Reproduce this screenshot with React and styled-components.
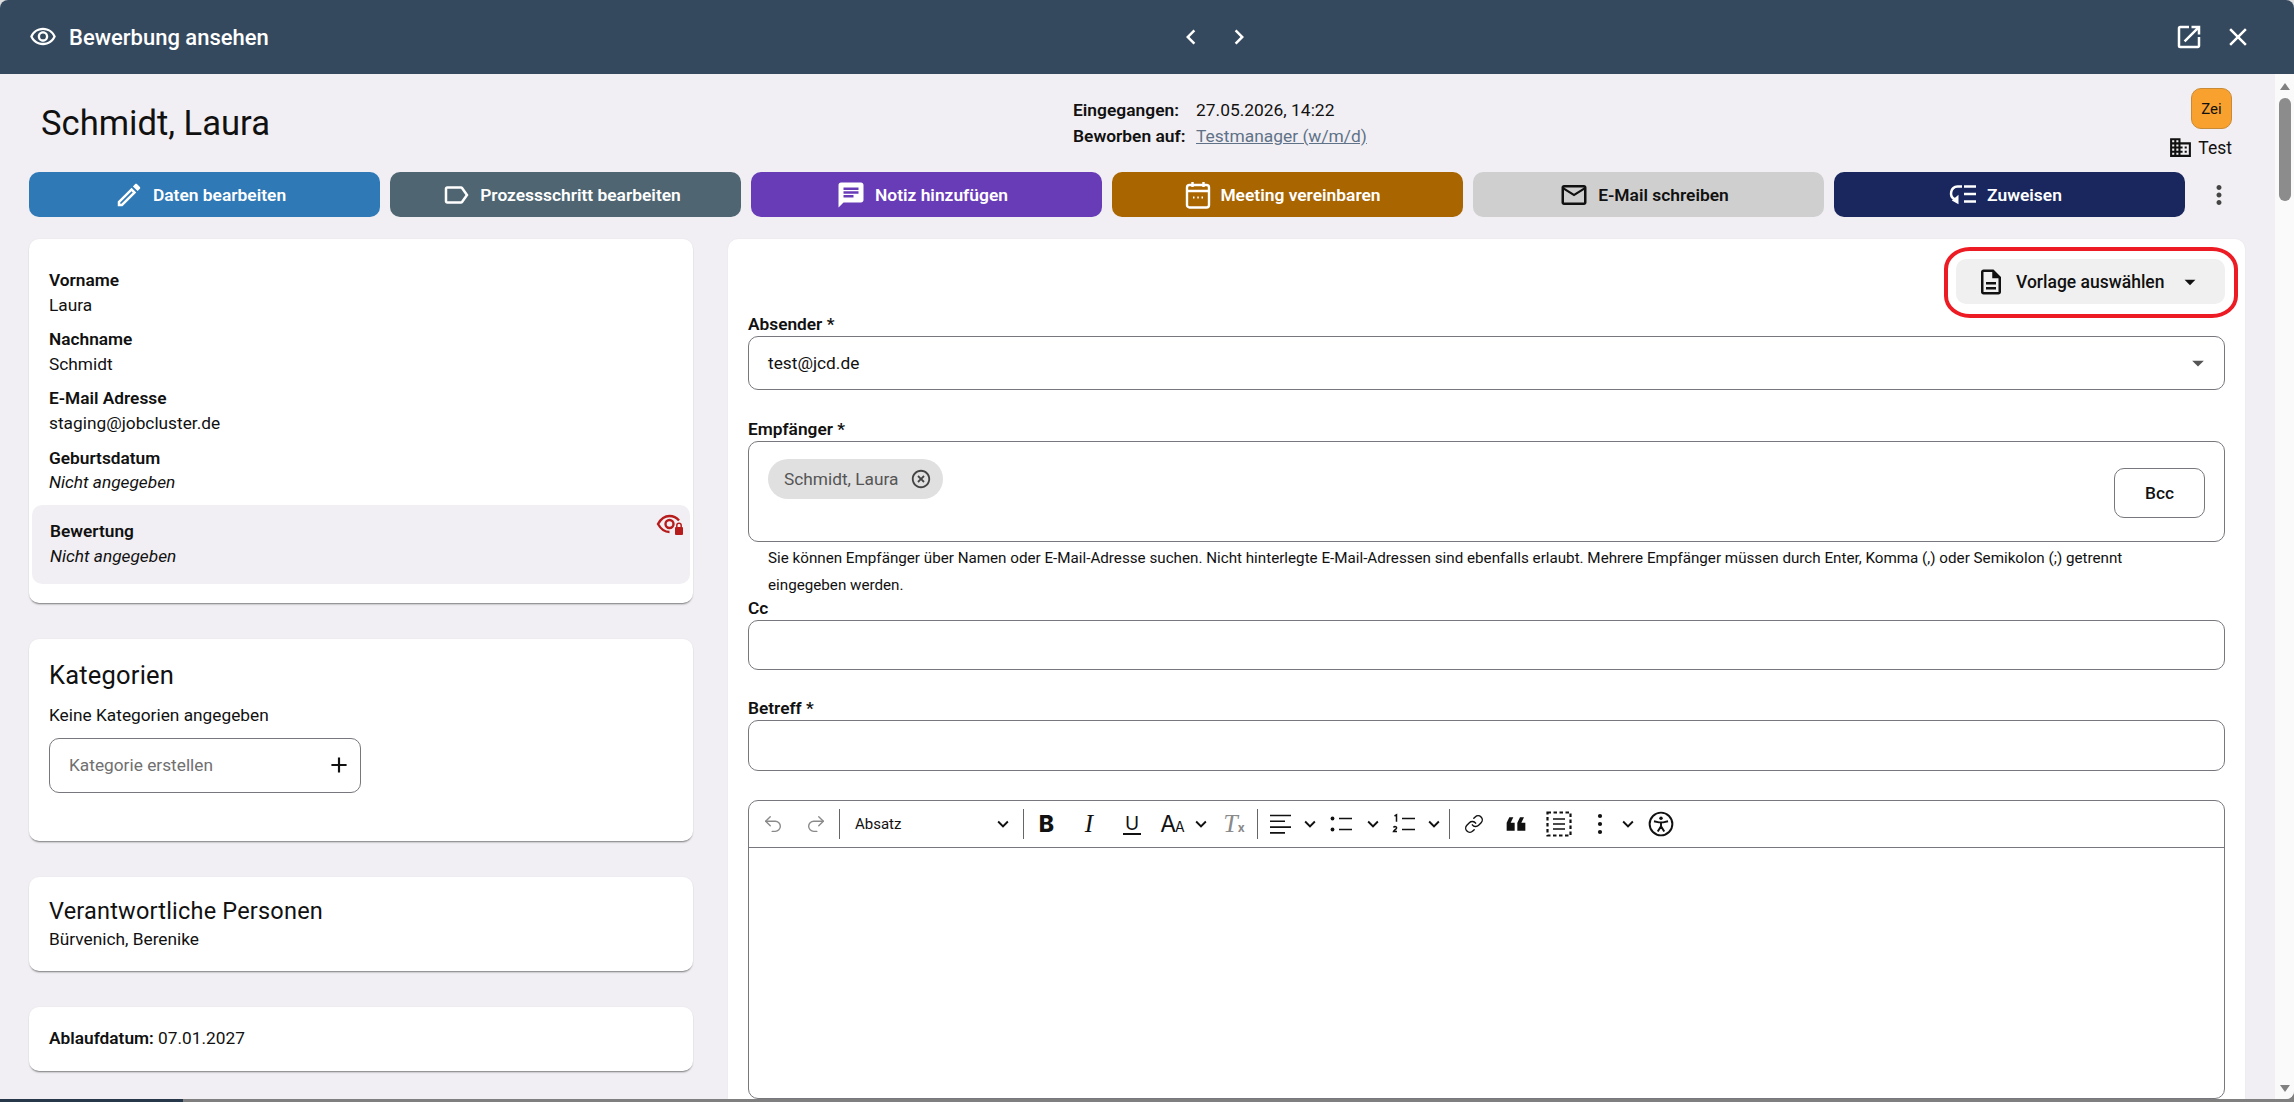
import React from 'react';
import styled, { createGlobalStyle } from 'styled-components';
import {
  MdOutlineVisibility, MdOpenInNew, MdClose, MdChevronLeft, MdChevronRight, MdOutlineEdit, MdOutlineLabel,
  MdChat, MdMailOutline, MdMoreVert, MdDomain, MdAdd, MdHighlightOff,
  MdOutlineDescription, MdArrowDropDown, MdKeyboardArrowDown, MdFormatQuote,
} from 'react-icons/md';
import { Undo2, Redo2, Link as LinkIcon } from 'lucide-react';

const Global = createGlobalStyle`
  html, body { margin: 0; padding: 0; height: 100%; overflow: hidden; }
  body { font-family: Roboto, "Liberation Sans", sans-serif; font-size: 17.3px; color: #111; background: linear-gradient(#dedede 50%, #7f7f7f 50%); }
  * { box-sizing: border-box; }
`;

const Page = styled.div`width: 2294px; height: 1102px; display: flex; flex-direction: column; overflow: hidden;`;
const Win = styled.div`height: 1099px; display: flex; flex-direction: column; border-radius: 8px 8px 8px 0; overflow: hidden; background: #f1eff3;`;
const Strip = styled.div`height: 3px; width: 183px; background: #26384a;`;
const Header = styled.header`height: 74px; flex: none; background: #35495e; color: #fff; display: grid; grid-template-columns: 1147px auto 1fr; align-items: center; padding: 0 41px 0 29px;`;
const HeaderTitle = styled.div`display: flex; align-items: center; gap: 12px; font-size: 22px; font-weight: 500;`;
const HeaderNav = styled.div`display: flex; align-items: center; gap: 18px; font-size: 30px;`;
const HeaderActions = styled.div`display: flex; justify-content: flex-end; align-items: center; gap: 19px;`;
const Body = styled.div`flex: 1; min-height: 0; display: flex;`;
const Main = styled.main`width: 2275px; flex: none; min-height: 0; display: flex; flex-direction: column; overflow: hidden;`;
const Scrollbar = styled.aside`flex: 1; background: #fafafa; display: flex; flex-direction: column; align-items: center; padding: 9px 0 7px;`;
const Arrow = styled.div`width: 0; height: 0; border-left: 5px solid transparent; border-right: 5px solid transparent; ${p => p.$down ? 'border-top: 7px solid #808080; margin-top: auto;' : 'border-bottom: 7px solid #808080;'}`;
const Thumb = styled.div`width: 12px; height: 103px; border-radius: 6px; background: #8c8c8c; margin-top: 8px;`;

const TopRow = styled.section`height: 98px; flex: none; display: flex; align-items: center; padding: 0 43px 0 41px;`;
const Name = styled.h1`margin: 0; width: 1032px; font-size: 34.6px; font-weight: 400; flex: none;`;
const Info = styled.div`flex: 1; display: grid; grid-template-columns: 123px auto; justify-content: start; line-height: 26px; font-size: 17.4px;`;
const InfoKey = styled.span`font-weight: 600;`;
const InfoLink = styled.a`color: #5f7288; text-decoration: underline;`;
const Client = styled.div`align-self: flex-start; padding-top: 14px; display: flex; flex-direction: column; align-items: flex-end; gap: 6px;`;
const Badge = styled.div`width: 41px; height: 41px; border-radius: 10px; background: #f9a12f; border: 1px solid #c98a35; display: flex; align-items: center; justify-content: center; font-size: 15px;`;
const ClientName = styled.div`display: flex; align-items: center; gap: 5px; font-size: 17.5px; line-height: 22px;`;

const Actions = styled.nav`flex: none; display: flex; align-items: center; gap: 10px; padding-left: 29px;`;
const ActionBtn = styled.button`width: 351px; height: 45px; border: 0; border-radius: 10px; background: ${p => p.$bg}; color: ${p => p.$fg || '#fff'}; font: 600 17.4px Roboto, sans-serif; display: flex; align-items: center; justify-content: center; gap: 9px; padding: 0 9px 0 0;`;
const Kebab = styled.div`width: 48px; display: flex; justify-content: center; font-size: 30px; color: #444;`;

const Columns = styled.div`flex: 1; min-height: 0; margin-top: 22px; display: grid; grid-template-columns: 664px 1fr; gap: 35px; padding: 0 30px 0 29px;`;
const Left = styled.div`display: flex; flex-direction: column; align-items: stretch;`;
const Card = styled.section`background: #fff; border-radius: 10px; box-shadow: 0 2px 2px -1px rgba(0,0,0,.5), 0 0 2px rgba(0,0,0,.06); padding: ${p => p.$pad}; height: ${p => p.$h}px; margin-bottom: ${p => p.$mb || 0}px;`;
const InfoRow = styled.div`padding-left: 20px; margin-bottom: 10px; line-height: 24.6px;`;
const Key = styled.div`font-weight: 600;`;
const Val = styled.div`font-style: ${p => p.$i ? 'italic' : 'normal'};`;
const Restricted = styled.div`position: relative; margin: 0 3px; height: 79px; padding: 14.5px 18px; border-radius: 10px; background: #f1eff3; line-height: 25px;`;
const LockEye = styled.svg`position: absolute; right: 6px; top: 9px;`;
const CardTitle = styled.h2`margin: 0; font-size: ${p => p.$size}px; font-weight: 400; line-height: 32px; letter-spacing: .2px;`;
const CardText = styled.div`line-height: 24px; margin-top: ${p => p.$mt || 0}px;`;
const CatInput = styled.div`margin-top: 11px; width: 312px; height: 55px; border: 1px solid #77777d; border-radius: 10px; display: flex; align-items: center; justify-content: space-between; padding: 0 8px 2px 19px; color: #707070;`;

const Right = styled.div`position: relative; background: #fff; border-radius: 10px 10px 0 0; padding: 20px 20px 0 20px; overflow: hidden; box-shadow: 0 0 2px rgba(0,0,0,.06);`;
const TemplateRow = styled.div`display: flex; justify-content: flex-end;`;
const TemplateWrap = styled.div`position: relative;`;
const TemplateBtn = styled.button`width: 269px; height: 45px; border: 0; border-radius: 10px; background: #f0f0f0; font: 500 17.5px Roboto, sans-serif; color: #111; display: flex; align-items: center; padding: 0 22px 0 20px; gap: 10px;`;
const Ring = styled.div`position: absolute; left: -12px; right: -13px; top: -12px; bottom: -14px; border: 4.5px solid #ed1c24; border-radius: 26px / 22px; pointer-events: none;`;
const Field = styled.div`margin-top: ${p => p.$mt}px;`;
const Label = styled.div`font-weight: 600; line-height: 24px; margin-bottom: ${p => p.$mb || 0}px;`;
const Box = styled.div`position: relative; height: ${p => p.$h}px; border: 1px solid #77777d; border-radius: 10px; display: flex; align-items: center; padding: 0 12px 0 19px; justify-content: space-between;`;
const Chip = styled.div`position: absolute; left: 19px; top: 17px; height: 40px; width: 175px; border-radius: 20px; background: #e0e0e0; color: #555; display: flex; align-items: center; justify-content: space-between; padding: 0 11px 0 16px;`;
const BccBtn = styled.button`position: absolute; right: 19px; top: 26px; width: 91px; height: 50px; border: 1px solid #77777d; border-radius: 10px; background: #fff; font: 500 17.3px Roboto, sans-serif; color: #111;`;
const Hint = styled.p`margin: 3px 0 0; padding: 0 60px 0 20px; font-size: 15.2px; line-height: 27px;`;
const Editor = styled.div`margin-top: 29px; height: 299px; border: 1px solid #77777d; border-radius: 10px; display: flex; flex-direction: column;`;
const Toolbar = styled.div`height: 47px; flex: none; border-bottom: 1px solid #77777d; display: flex; align-items: center; padding-left: 2px; color: #111;`;
const Tool = styled.span`width: ${p => p.$w}px; flex: none; display: flex; align-items: center; justify-content: center; color: ${p => p.$muted ? '#8a8a8a' : '#111'}; font-size: 24px; line-height: 1; & > svg { flex: none; }`;
const Sep = styled.span`width: ${p => p.$w}px; flex: none; display: flex; justify-content: center; &::after { content: ''; width: 1px; height: 30px; background: #666; }`;
const ParaSelect = styled.span`width: 180px; flex: none; display: flex; align-items: center; justify-content: space-between; padding: 0 8px 0 13px; font-size: 15px;`;
const Bold = styled.span`font: 800 23px Inter, sans-serif;`;
const Ital = styled.span`font: italic 400 25px "Liberation Serif", serif;`;
const Under = styled.span`font: 400 19px Inter, sans-serif; border-bottom: 2px solid #111; line-height: 19px; padding: 0 2px;`;
const BigA = styled.span`font: 400 23px Inter, sans-serif; letter-spacing: -1px; & small { font-size: 14px; }`;
const Clear = styled.span`font: italic 400 26px "Liberation Serif", serif; color: #8a8a8a; & small { font: 700 12px Inter, sans-serif; }`;

const Lines = ({ kind }) => (
  <svg width="26" height="26" viewBox="0 0 26 26" fill="none" stroke="#111" strokeWidth="1.6">
    {kind === 'align' && <path d="M3 4.500h21M3 10.300h15M3 16.100h21M3 21.900h15" />}
    {kind === 'list' && <><circle cx="4.500" cy="7.500" r="1.900" fill="#111" stroke="none" /><circle cx="4.500" cy="18.500" r="1.900" fill="#111" stroke="none" /><path d="M11 7.500h13M11 18.500h13" /></>}
    {kind === 'num' && <><path d="M11 7.500h13M11 18.500h13" /><path d="M3.500 5l2-1.200v7M2.500 16.500c1-1.500 3.500-1 3 .7-.3 1-2.500 2-3 3.300h3.500" strokeWidth="1.500" /></>}
    {kind === 'block' && <><rect x="1.500" y="1.500" width="23" height="23" strokeDasharray="3.500 2.500" strokeWidth="2.200" /><path d="M7 8h12M7 13h12M7 18h12" /></>}
    {kind === 'kebab' && <><circle cx="13" cy="5" r="2.100" fill="#111" stroke="none" /><circle cx="13" cy="13" r="2.100" fill="#111" stroke="none" /><circle cx="13" cy="21" r="2.100" fill="#111" stroke="none" /></>}
  </svg>
);
const Chev = () => <MdKeyboardArrowDown size={22} />;
const A11y = () => (
  <svg width="26" height="26" viewBox="0 0 24 24" fill="none" stroke="#111" strokeWidth="1.800">
    <circle cx="12" cy="12" r="10.500" />
    <circle cx="12" cy="6.600" r="1.600" fill="#111" stroke="none" />
    <path d="M5.500 9.500l4.500 1h4l4.500-1M12 10.500v3.500M12 14l-3 5M12 14l3 5" />
  </svg>
);
const CalendarIcon = () => (
  <svg width="26" height="28" viewBox="0 0 26 28" fill="none" stroke="#fff" strokeWidth="2.400">
    <rect x="2" y="4" width="22" height="22.500" rx="2.500" />
    <path d="M2 10h22M7.500 1v5M18.500 1v5" />
    <path d="M8 16.500h1.500M12.300 16.500h1.500M16.500 16.500h1.500" strokeWidth="2" />
  </svg>
);
const AssignIcon = () => (
  <svg width="30" height="24" viewBox="0 0 30 24" fill="none" stroke="#fff" strokeWidth="2.500">
    <path d="M14 3.500H9.500a6.800 6.800 0 00-3 12.700l3 1.500" />
    <path d="M10.500 11.800v9.400L3.800 17.500z" fill="#fff" strokeWidth="0" />
    <path d="M16 3.500h12M16 11h12M16 18.500h12" />
  </svg>
);

export default function App() {
  return (
    <Page>
      <Global />
      <Win>
        <Header>
          <HeaderTitle><MdOutlineVisibility size={28} />Bewerbung ansehen</HeaderTitle>
          <HeaderNav><MdChevronLeft /><MdChevronRight /></HeaderNav>
          <HeaderActions><MdOpenInNew size={30} /><MdClose size={30} /></HeaderActions>
        </Header>
        <Body>
          <Main>
            <TopRow>
              <Name>Schmidt, Laura</Name>
              <Info>
                <InfoKey>Eingegangen:</InfoKey><span>27.05.2026, 14:22</span>
                <InfoKey>Beworben auf:</InfoKey><InfoLink>Testmanager (w/m/d)</InfoLink>
              </Info>
              <Client>
                <Badge>Zei</Badge>
                <ClientName><MdDomain size={25} />Test</ClientName>
              </Client>
            </TopRow>
            <Actions>
              <ActionBtn $bg="#2e79b6"><MdOutlineEdit size={30} />Daten bearbeiten</ActionBtn>
              <ActionBtn $bg="#4f6672"><MdOutlineLabel size={30} />Prozessschritt bearbeiten</ActionBtn>
              <ActionBtn $bg="#683bb7"><MdChat size={30} />Notiz hinzufügen</ActionBtn>
              <ActionBtn $bg="#a86500"><CalendarIcon />Meeting vereinbaren</ActionBtn>
              <ActionBtn $bg="#cfcfcf" $fg="#111"><MdMailOutline size={30} />E-Mail schreiben</ActionBtn>
              <ActionBtn $bg="#19275e"><AssignIcon />Zuweisen</ActionBtn>
              <Kebab><MdMoreVert /></Kebab>
            </Actions>
            <Columns>
              <Left>
                <Card $pad="29px 0 0" $h={364} $mb={36}>
                  <InfoRow><Key>Vorname</Key><Val>Laura</Val></InfoRow>
                  <InfoRow><Key>Nachname</Key><Val>Schmidt</Val></InfoRow>
                  <InfoRow><Key>E-Mail Adresse</Key><Val>staging@jobcluster.de</Val></InfoRow>
                  <InfoRow><Key>Geburtsdatum</Key><Val $i>Nicht angegeben</Val></InfoRow>
                  <Restricted>
                    <Key>Bewertung</Key><Val $i>Nicht angegeben</Val>
                    <LockEye width="28" height="24" viewBox="0 0 28 24" fill="none" stroke="#b71c1c" strokeWidth="2.400">
                      <path d="M23 6.500C20.500 3.500 17.500 2 13.500 2 8.500 2 4.500 5.500 2 10c2.500 4.500 6.500 8 11.500 8" />
                      <circle cx="13.500" cy="10" r="4" />
                      <rect x="19" y="13" width="8" height="8" fill="#b71c1c" stroke="none" rx="1" />
                      <path d="M20.800 13v-1.500a2.200 2.200 0 014.400 0V13" strokeWidth="1.500" />
                    </LockEye>
                  </Restricted>
                </Card>
                <Card $pad="20px 20px 0" $h={202} $mb={36}>
                  <CardTitle $size={25.5}>Kategorien</CardTitle>
                  <CardText $mt={12}>Keine Kategorien angegeben</CardText>
                  <CatInput>Kategorie erstellen<MdAdd size={26} color="#111" /></CatInput>
                </Card>
                <Card $pad="18px 20px 0" $h={94} $mb={36}>
                  <CardTitle $size={23.5}>Verantwortliche Personen</CardTitle>
                  <CardText>Bürvenich, Berenike</CardText>
                </Card>
                <Card $pad="18.5px 20px 0" $h={64}>
                  <CardText><InfoKey>Ablaufdatum:</InfoKey> 07.01.2027</CardText>
                </Card>
              </Left>
              <Right>
                <TemplateRow>
                  <TemplateWrap>
                    <TemplateBtn><MdOutlineDescription size={30} />Vorlage auswählen<MdArrowDropDown size={26} style={{ marginLeft: 'auto' }} /></TemplateBtn>
                    <Ring />
                  </TemplateWrap>
                </TemplateRow>
                <Field $mt={8}>
                  <Label>Absender *</Label>
                  <Box $h={54}>test@jcd.de<MdArrowDropDown size={28} color="#555" /></Box>
                </Field>
                <Field $mt={27}>
                  <Label>Empfänger *</Label>
                  <Box $h={101}>
                    <Chip>Schmidt, Laura<MdHighlightOff size={22} color="#444" /></Chip>
                    <BccBtn>Bcc</BccBtn>
                  </Box>
                  <Hint>Sie können Empfänger über Namen oder E-Mail-Adresse suchen. Nicht hinterlegte E-Mail-Adressen sind ebenfalls erlaubt. Mehrere Empfänger müssen durch Enter, Komma (,) oder Semikolon (;) getrennt eingegeben werden.</Hint>
                </Field>
                <Field $mt={-3}>
                  <Label>Cc</Label>
                  <Box $h={50} />
                </Field>
                <Field $mt={26}>
                  <Label>Betreff *</Label>
                  <Box $h={51} />
                </Field>
                <Editor>
                  <Toolbar>
                    <Tool $w={43} $muted><Undo2 size={22} strokeWidth={1.5} /></Tool>
                    <Tool $w={43} $muted><Redo2 size={22} strokeWidth={1.5} /></Tool>
                    <Sep $w={5} />
                    <ParaSelect>Absatz<Chev /></ParaSelect>
                    <Sep $w={3} />
                    <Tool $w={43}><Bold>B</Bold></Tool>
                    <Tool $w={42}><Ital>I</Ital></Tool>
                    <Tool $w={44}><Under>U</Under></Tool>
                    <Tool $w={36}><BigA>A<small>A</small></BigA></Tool>
                    <Tool $w={22}><Chev /></Tool>
                    <Tool $w={44}><Clear>T<small>x</small></Clear></Tool>
                    <Sep $w={3} />
                    <Tool $w={42}><Lines kind="align" /></Tool>
                    <Tool $w={18}><Chev /></Tool>
                    <Tool $w={44}><Lines kind="list" /></Tool>
                    <Tool $w={20}><Chev /></Tool>
                    <Tool $w={42}><Lines kind="num" /></Tool>
                    <Tool $w={18}><Chev /></Tool>
                    <Sep $w={13} />
                    <Tool $w={36}><LinkIcon size={20} strokeWidth={1.7} /></Tool>
                    <Tool $w={48}><MdFormatQuote size={32} style={{ transform: 'rotate(180deg)' }} /></Tool>
                    <Tool $w={38}><Lines kind="block" /></Tool>
                    <Tool $w={44}><Lines kind="kebab" /></Tool>
                    <Tool $w={12}><Chev /></Tool>
                    <Tool $w={54}><A11y /></Tool>
                  </Toolbar>
                </Editor>
              </Right>
            </Columns>
          </Main>
          <Scrollbar>
            <Arrow />
            <Thumb />
            <Arrow $down />
          </Scrollbar>
        </Body>
      </Win>
      <Strip />
    </Page>
  );
}
